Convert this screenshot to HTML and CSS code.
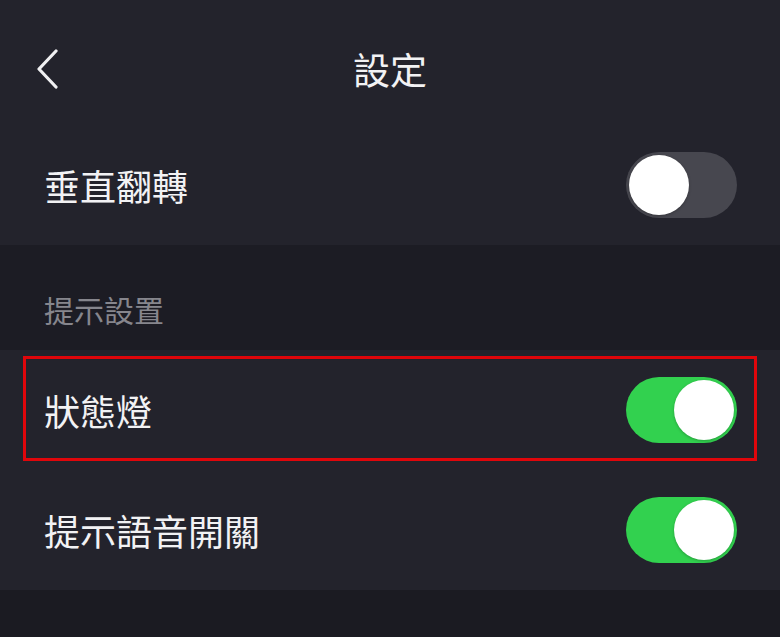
FILE: index.html
```
<!DOCTYPE html>
<html lang="zh-Hant">
<head>
<meta charset="utf-8">
<title>設定</title>
<link rel="stylesheet" href="styles.css">
</head>
<body>
<div class="page">
  <header class="header">
    <div class="back">
      <svg width="24" height="40" viewBox="0 0 24 40"><path d="M20 2 L3 20 L20 38" fill="none" stroke="#f0f0f2" stroke-width="3.2" stroke-linecap="round" stroke-linejoin="round"/></svg>
    </div>
    <h1 class="title">設定</h1>
    <div></div>
  </header>
  <div class="row">
    <span class="label">垂直翻轉</span>
    <span class="toggle off"><span class="knob"></span></span>
  </div>
  <div class="section">提示設置</div>
  <div class="row highlighted">
    <span class="label">狀態燈</span>
    <span class="toggle on"><span class="knob"></span></span>
    <div class="mark"></div>
  </div>
  <div class="row">
    <span class="label">提示語音開關</span>
    <span class="toggle on"><span class="knob"></span></span>
  </div>
</div>
</body>
</html>
```
FILE: styles.css
```
html, body {
  margin: 0;
  padding: 0;
  background: #1b1b22;
}
.page {
  width: 780px;
  font-family: "Noto Sans CJK TC", "Noto Sans CJK SC", sans-serif;
  color: #f2f2f4;
}
.header {
  height: 125px;
  background: #23232c;
  display: grid;
  grid-template-columns: 1fr auto 1fr;
  align-items: center;
  padding-top: 13px;
  box-sizing: border-box;
}
.back {
  padding-left: 36px;
  display: flex;
  align-items: center;
}
.back svg { display: block; }
.title {
  margin: 0;
  font-size: 37px;
  font-weight: 400;
  line-height: 1;
}
.row {
  height: 120px;
  background: #23232c;
  display: flex;
  align-items: center;
  justify-content: space-between;
  padding: 0 43px 0 44px;
  position: relative;
}
.label {
  font-size: 36px;
  line-height: 1;
}
.section {
  height: 105px;
  background: #1c1c24;
  color: #86868d;
  font-size: 30px;
  line-height: 1;
  display: flex;
  align-items: center;
  padding: 22px 0 0 44px;
  box-sizing: border-box;
}
.toggle {
  width: 111px;
  height: 66px;
  border-radius: 33px;
  display: flex;
  align-items: center;
  padding: 0 3px;
  box-sizing: border-box;
}
.toggle.off {
  background: #47474f;
  justify-content: flex-start;
}
.toggle.on {
  background: #32d14f;
  justify-content: flex-end;
}
.knob {
  width: 60px;
  height: 60px;
  border-radius: 50%;
  background: #ffffff;
  box-shadow: 0 1px 3px rgba(0,0,0,0.25);
}
.mark {
  position: absolute;
  left: 23px;
  right: 23px;
  top: 6px;
  height: 105px;
  border: 3px solid #e0060b;
  box-sizing: border-box;
}
```
